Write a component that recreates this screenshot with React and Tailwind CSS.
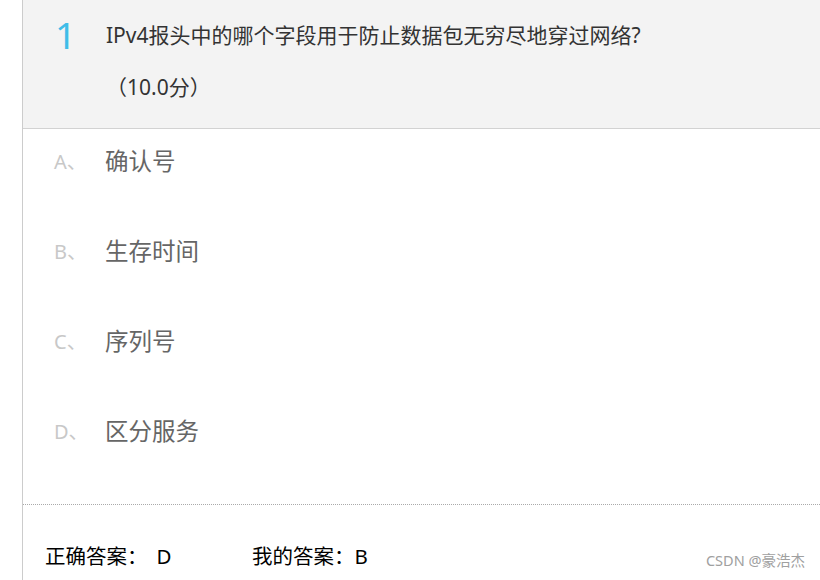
import React from "react";

const options = [
  { label: "A、", text: "确认号" },
  { label: "B、", text: "生存时间" },
  { label: "C、", text: "序列号" },
  { label: "D、", text: "区分服务" },
];

export default function App() {
  return (
    <div className="relative w-[820px] h-[580px] overflow-hidden bg-white font-['Noto_Sans','Noto_Sans_CJK_SC',sans-serif]">
      <div className="ml-[22px] h-full border-l border-[#cccccc]">
        {/* question header */}
        <div className="flex bg-[#f3f3f3] border-b border-[#d2d2d2] pl-[32px] pt-[20px] pb-[26px]">
          <div className="w-[51px] -mt-[4px] text-[37px] leading-none text-[#3fbde8]">1</div>
          <div className="flex flex-col gap-[22px]">
            <p className="text-[21px] leading-[30px] text-[#333333]">
              IPv4报头中的哪个字段用于防止数据包无穷尽地穿过网络?
            </p>
            <p className="text-[21px] leading-[30px] text-[#333333]">（10.0分）</p>
          </div>
        </div>

        {/* options */}
        <div className="flex flex-col gap-[60px] pt-[18px] pb-[57px] border-b border-dotted border-[#aaaaaa]">
          {options.map((o) => (
            <div key={o.label} className="flex items-center h-[30px] pl-[31px]">
              <span className="w-[51px] text-[20px] text-[#c8c8c8]">{o.label}</span>
              <span className="text-[23.5px] text-[#666666]">{o.text}</span>
            </div>
          ))}
        </div>

        {/* answers */}
        <div className="flex items-center h-[30px] mt-[36px] pl-[22px] text-[20.5px] text-black">
          <span className="w-[207px]">
            正确答案：<span className="ml-[9px]">D</span>
          </span>
          <span>我的答案：B</span>
        </div>
      </div>

      <div className="absolute right-[15px] bottom-[8px] text-[14.5px] text-[#a0a0a0]">CSDN @豪浩杰</div>
    </div>
  );
}
